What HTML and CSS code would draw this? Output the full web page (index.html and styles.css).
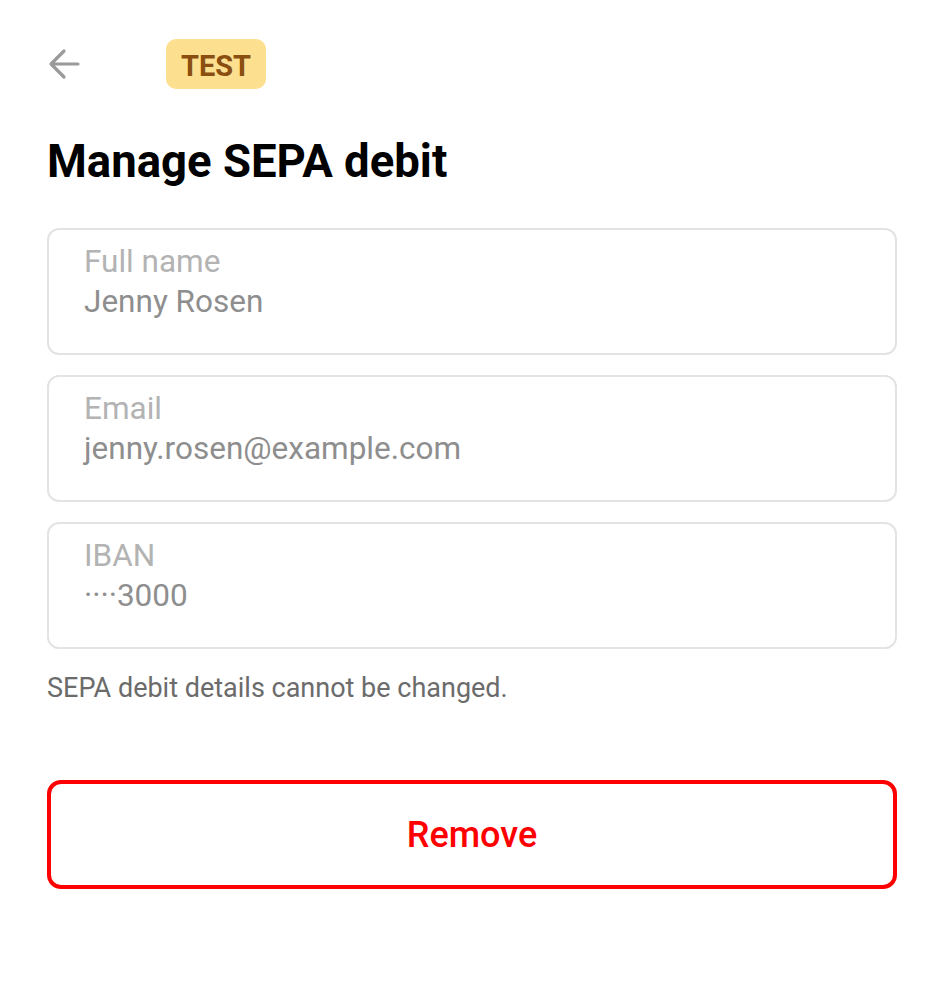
FILE: index.html
```html
<!DOCTYPE html>
<html>
<head>
<meta charset="utf-8">
<link rel="stylesheet" href="styles.css">
</head>
<body>
<div class="page">
  <header class="topbar">
    <button class="back" aria-label="Back">
      <svg width="32" height="32" viewBox="0 0 32 32"><path d="M30 16H3M16 3L3 16L16 29" fill="none" stroke="#9a9a9a" stroke-width="3.2" stroke-linecap="round" stroke-linejoin="round"/></svg>
    </button>
    <span class="badge">TEST</span>
  </header>
  <h1 class="title">Manage SEPA debit</h1>
  <div class="fields">
    <div class="field">
      <div class="field-label">Full name</div>
      <div class="field-value">Jenny Rosen</div>
    </div>
    <div class="field">
      <div class="field-label">Email</div>
      <div class="field-value">jenny.rosen@example.com</div>
    </div>
    <div class="field">
      <div class="field-label">IBAN</div>
      <div class="field-value">····3000</div>
    </div>
  </div>
  <p class="note">SEPA debit details cannot be changed.</p>
  <button class="remove">Remove</button>
</div>
</body>
</html>
```
FILE: styles.css
```css
html, body {
  margin: 0;
  padding: 0;
  background: #ffffff;
}
body {
  font-family: Roboto, "Liberation Sans", sans-serif;
}
.page {
  padding: 39px 47px 0 47px;
}
.topbar {
  display: flex;
  align-items: center;
  height: 50px;
}
.back {
  border: 0;
  background: none;
  padding: 0;
  margin: 0 0 0 1px;
  width: 32px;
  height: 32px;
  display: flex;
  align-items: center;
  justify-content: center;
}
.badge {
  margin-left: 86px;
  height: 50px;
  width: 100px;
  box-sizing: border-box;
  padding-top: 3px;
  display: flex;
  align-items: center;
  justify-content: center;
  background: #fde08f;
  color: #8a4e10;
  font-weight: 700;
  font-size: 29px;
  border-radius: 10px;
}
.title {
  margin: 47px 0 0 0;
  font-size: 45.5px;
  line-height: 52px;
  font-weight: 700;
  color: #000;
}
.fields {
  margin-top: 40px;
  display: flex;
  flex-direction: column;
  gap: 20px;
}
.field {
  border: 2px solid #e3e3e3;
  border-radius: 12px;
  height: 127px;
  box-sizing: border-box;
  padding: 12px 35px 0 35px;
}
.field-label {
  font-size: 31.5px;
  line-height: 40px;
  color: #b3b3b3;
}
.field-value {
  font-size: 31.5px;
  line-height: 40px;
  color: #8e8e8e;
}
.note {
  margin: 23px 0 0 0;
  font-size: 27px;
  line-height: 32px;
  color: #6b6b6b;
}
.remove {
  margin-top: 76px;
  display: block;
  width: 100%;
  height: 109px;
  border: 4px solid #ff0000;
  border-radius: 14px;
  background: #fff;
  color: #ff0000;
  font-family: Roboto, "Liberation Sans", sans-serif;
  font-weight: 500;
  font-size: 36px;
}
```
